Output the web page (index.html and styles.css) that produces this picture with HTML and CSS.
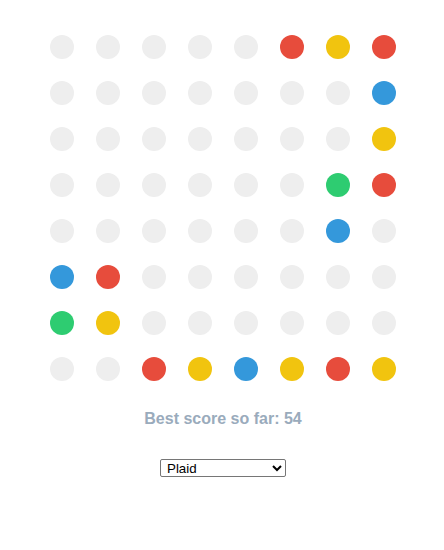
FILE: index.html
```html
<!DOCTYPE html>
<html>
<head>
<meta charset="utf-8">
<link rel="stylesheet" href="styles.css">
</head>
<body>
<div class="app">
  <div class="board">
    <span class="dot"></span><span class="dot"></span><span class="dot"></span><span class="dot"></span><span class="dot"></span><span class="dot red"></span><span class="dot yellow"></span><span class="dot red"></span>
    <span class="dot"></span><span class="dot"></span><span class="dot"></span><span class="dot"></span><span class="dot"></span><span class="dot"></span><span class="dot"></span><span class="dot blue"></span>
    <span class="dot"></span><span class="dot"></span><span class="dot"></span><span class="dot"></span><span class="dot"></span><span class="dot"></span><span class="dot"></span><span class="dot yellow"></span>
    <span class="dot"></span><span class="dot"></span><span class="dot"></span><span class="dot"></span><span class="dot"></span><span class="dot"></span><span class="dot green"></span><span class="dot red"></span>
    <span class="dot"></span><span class="dot"></span><span class="dot"></span><span class="dot"></span><span class="dot"></span><span class="dot"></span><span class="dot blue"></span><span class="dot"></span>
    <span class="dot blue"></span><span class="dot red"></span><span class="dot"></span><span class="dot"></span><span class="dot"></span><span class="dot"></span><span class="dot"></span><span class="dot"></span>
    <span class="dot green"></span><span class="dot yellow"></span><span class="dot"></span><span class="dot"></span><span class="dot"></span><span class="dot"></span><span class="dot"></span><span class="dot"></span>
    <span class="dot"></span><span class="dot"></span><span class="dot red"></span><span class="dot yellow"></span><span class="dot blue"></span><span class="dot yellow"></span><span class="dot red"></span><span class="dot yellow"></span>
  </div>
  <p class="score">Best score so far: 54</p>
  <select class="theme">
    <option>Plaid</option>
    <option>Classic</option>
    <option>Dark</option>
  </select>
</div>
</body>
</html>
```
FILE: styles.css
```css
html, body {
  margin: 0;
  padding: 0;
  background: #fff;
}
.app {
  display: flex;
  flex-direction: column;
  align-items: center;
  padding-top: 24px;
  font-family: "Liberation Sans", Arial, sans-serif;
}
.board {
  display: grid;
  grid-template-columns: repeat(8, 46px);
  grid-auto-rows: 46px;
  place-items: center;
  margin-left: 1px;
}
.dot {
  width: 24px;
  height: 24px;
  border-radius: 50%;
  background: #eeeeee;
}
.red { background: #e74c3c; }
.yellow { background: #f1c40f; }
.blue { background: #3498db; }
.green { background: #2ecc71; }
.score {
  margin: 18px 0 0 2px;
  font-size: 16px;
  font-weight: bold;
  color: #9aabbc;
  line-height: 18px;
}
.theme {
  margin: 31px 0 0 2px;
  width: 126px;
  height: 18px;
  font-family: "Liberation Sans", Arial, sans-serif;
  font-size: 13.33px;
  border: 1px solid #767676;
  border-radius: 2px;
  background: #fff;
  color: #000;
  padding: 0 0 0 2px;
}
```
